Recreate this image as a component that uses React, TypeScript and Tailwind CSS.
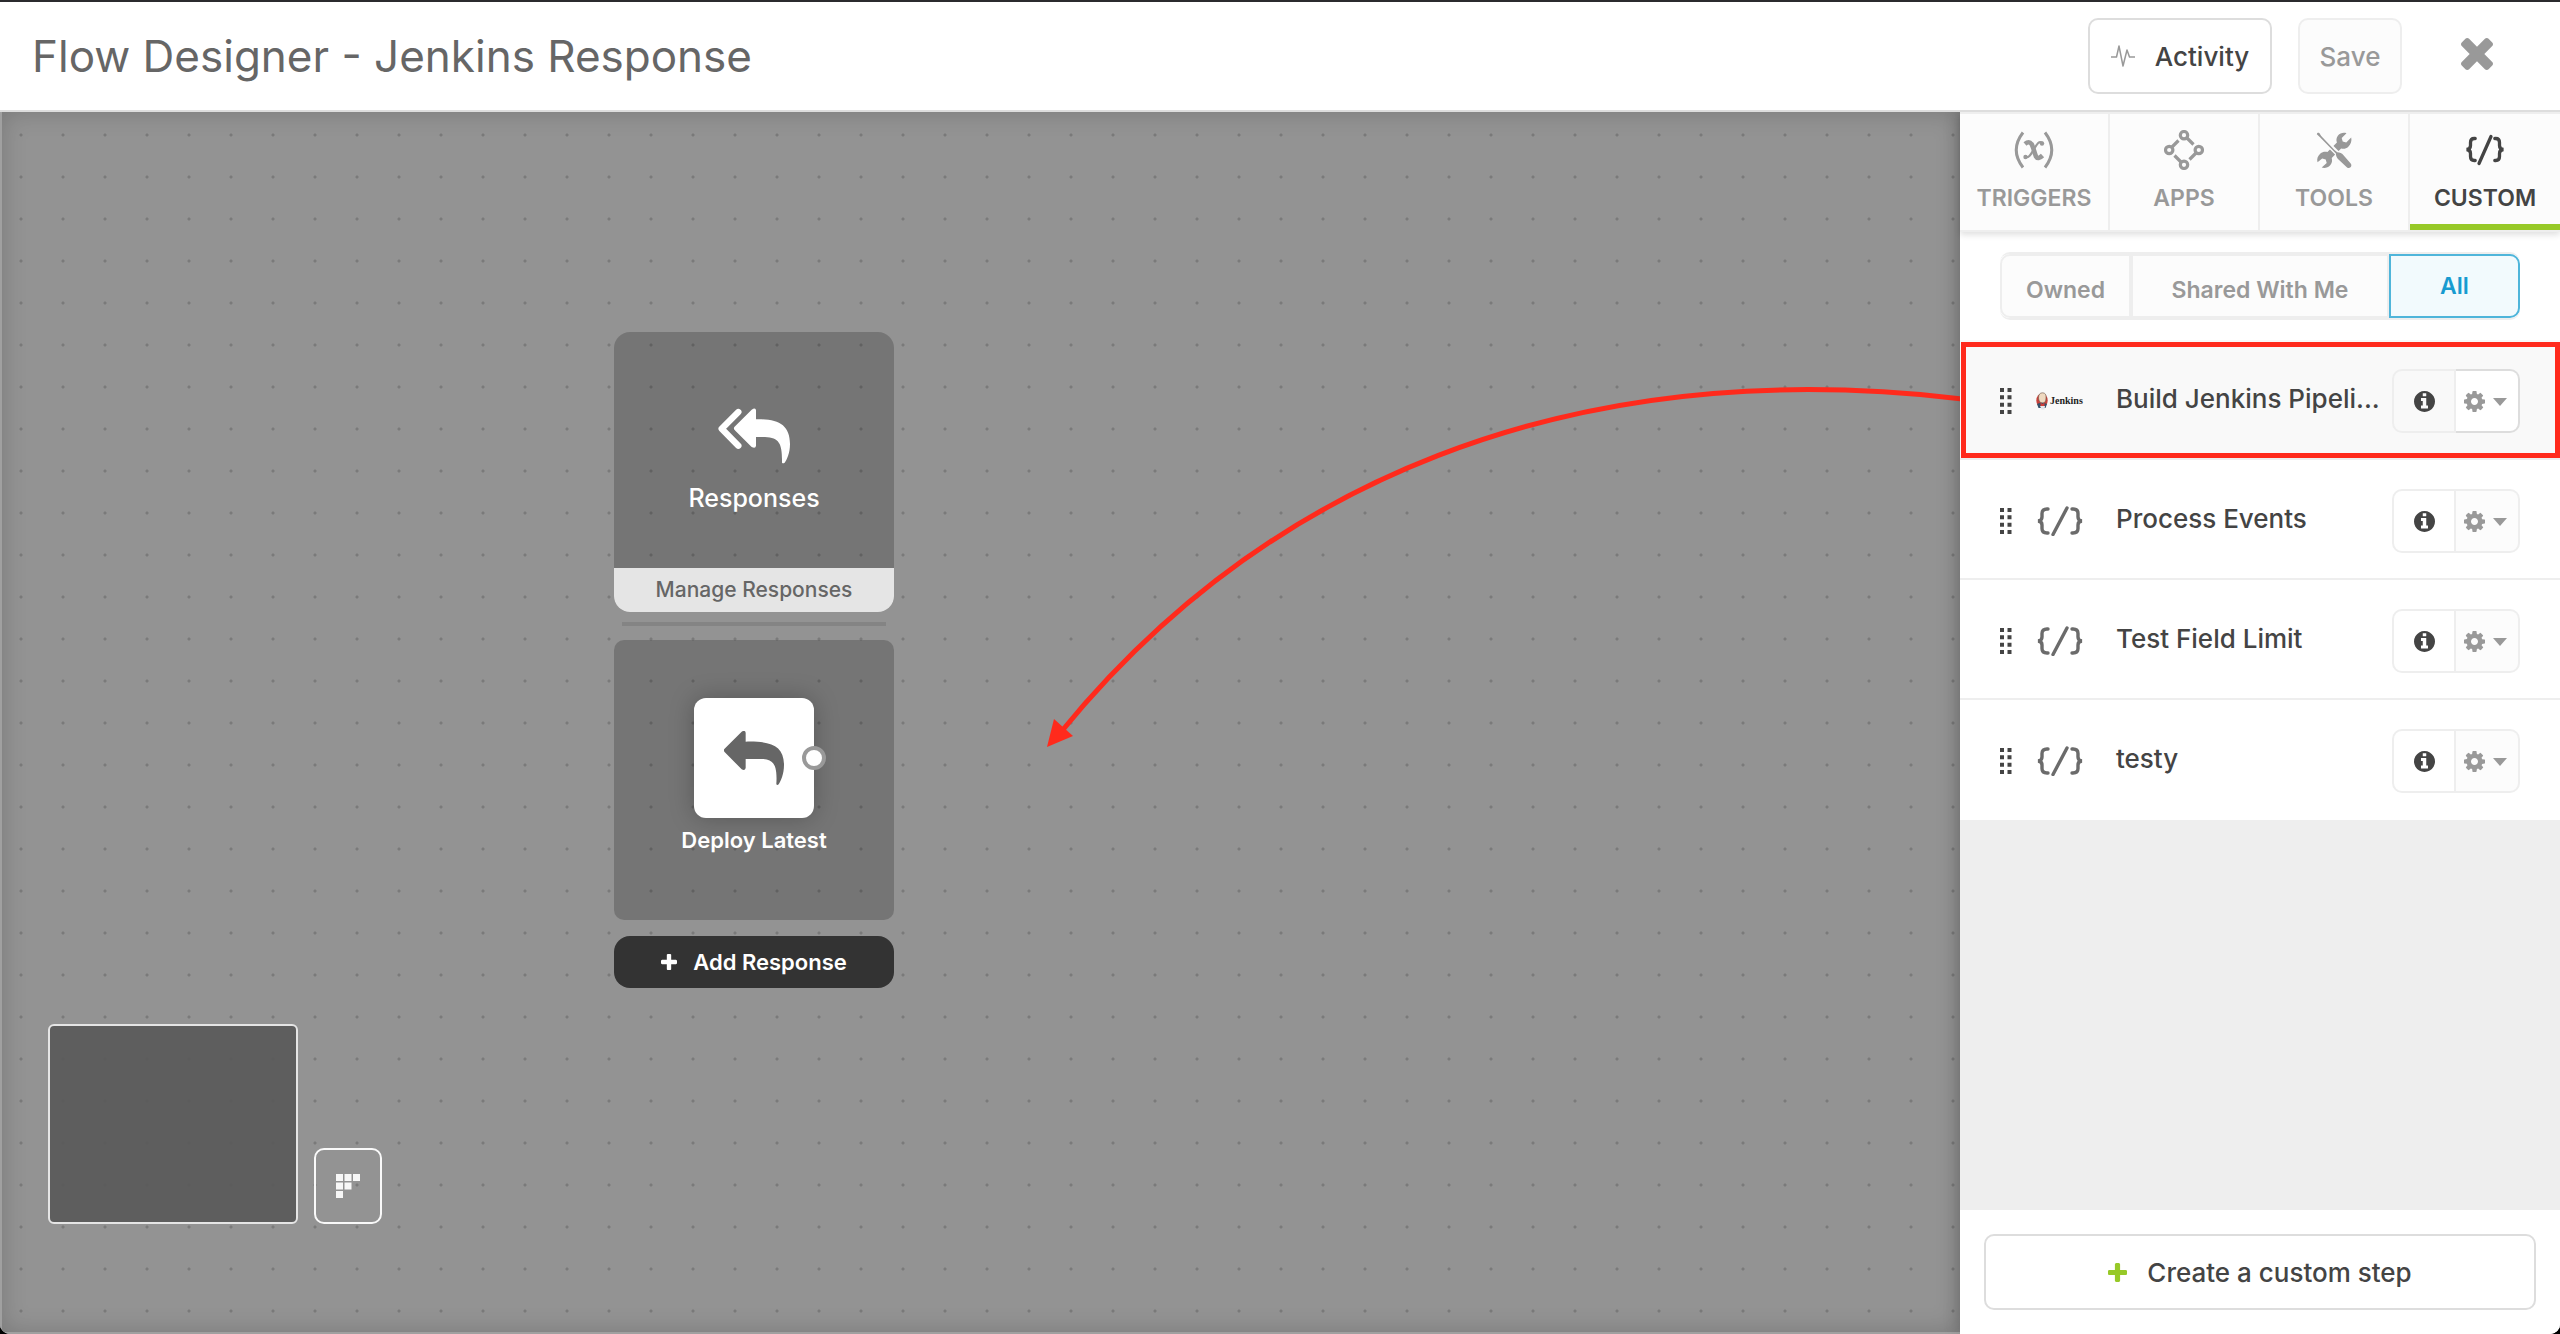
import type { ReactNode } from "react";

function Glyph({ box, d, className }: { box: string; d: string; className: string }) {
  return (
    <svg viewBox={box} className={className} fill="currentColor" aria-hidden="true">
      <path d={d} />
    </svg>
  );
}

const TIMES =
  "M1490 1322q0 40-28 68l-136 136q-28 28-68 28t-68-28l-294-294-294 294q-28 28-68 28t-68-28l-136-136q-28-28-28-68t28-68l294-294-294-294q-28-28-28-68t28-68l136-136q28-28 68-28t68 28l294 294 294-294q28-28 68-28t68 28l136 136q28 28 28 68t-28 68l-294 294 294 294q28 28 28 68z";
const PLUS =
  "M1600 736v192q0 40-28 68t-68 28h-416v416q0 40-28 68t-68 28h-192q-40 0-68-28t-28-68v-416h-416q-40 0-68-28t-28-68v-192q0-40 28-68t68-28h416v-416q0-40 28-68t68-28h192q40 0 68 28t28 68v416h416q40 0 68 28t28 68z";
const COG =
  "M1152 896q0-106-75-181t-181-75-181 75-75 181 75 181 181 75 181-75 75-181zm512-109v222q0 12-8 23t-20 13l-185 28q-19 54-39 91 35 50 107 138 10 12 10 25t-9 23q-27 37-99 108t-94 71q-12 0-26-9l-138-108q-44 23-91 38-16 136-29 186-7 28-36 28h-222q-14 0-24.5-8.5t-11.5-21.5l-28-184q-49-16-90-37l-141 107q-10 9-25 9-14 0-25-11-126-114-165-168-7-10-7-23 0-12 8-23 15-21 51-66.5t54-70.5q-27-50-41-99l-183-27q-13-2-21-12.5t-8-23.5v-222q0-12 8-23t19-13l186-28q14-46 39-92-40-57-107-138-10-12-10-24 0-10 9-23 26-36 98.5-107.5t94.5-71.5q13 0 26 10l138 107q44-23 91-38 16-136 29-186 7-28 36-28h222q14 0 24.5 8.5t11.5 21.5l28 184q49 16 90 37l142-107q9-9 24-9 13 0 25 10 129 119 165 170 7 8 7 22 0 12-8 23-15 21-51 66.5t-54 70.5q26 50 41 98l183 28q13 2 21 12.5t8 23.5z";
const INFO =
  "M1152 1376v-160q0-14-9-23t-23-9h-96v-512q0-14-9-23t-23-9h-320q-14 0-23 9t-9 23v160q0 14 9 23t23 9h96v320h-96q-14 0-23 9t-9 23v160q0 14 9 23t23 9h448q14 0 23-9t9-23zm-128-896v-160q0-14-9-23t-23-9h-192q-14 0-23 9t-9 23v160q0 14 9 23t23 9h192q14 0 23-9t9-23zm640 416q0 209-103 385.5t-279.5 279.5-385.5 103-385.5-103-279.5-279.5-103-385.5 103-385.5 279.5-279.5 385.5-103 385.5 103 279.5 279.5 103 385.5z";

function TriggerIcon() {
  return (
    <svg viewBox="0 0 40 40" className="size-10" fill="none" stroke="currentColor" aria-hidden="true">
      <path d="M9 2.5Q-4.500 20 9 37.500M31 2.500Q44.500 20 31 37.500" strokeWidth="3" />
      <path d="M11 14q4-3.500 6.500 0c1.500 2 3 9 4.500 12.500q2 3.500 6.500-1" strokeWidth="4.600" />
      <path d="M28.500 13c-4-3-6 2-9 7s-4.500 8-8.500 7" strokeWidth="2.200" />
      <circle cx="28" cy="13.500" r="2.200" fill="currentColor" stroke="none" />
      <circle cx="11.500" cy="27" r="2.200" fill="currentColor" stroke="none" />
    </svg>
  );
}

function AppsIcon() {
  return (
    <svg viewBox="0 0 40 40" className="size-10" fill="none" stroke="currentColor" strokeWidth="3.200" aria-hidden="true">
      <circle cx="20" cy="5.200" r="3.700" />
      <circle cx="5.200" cy="20" r="3.700" />
      <circle cx="34.800" cy="20" r="3.700" />
      <circle cx="20" cy="34.800" r="3.700" />
      <path d="M8 17l6.500-6.500M23 8l6.500 6.500M32 23l-6.500 6.500M17 32l-6.500-6.500" />
    </svg>
  );
}

function ToolsIcon() {
  return (
    <svg viewBox="0 0 40 40" className="size-10" aria-hidden="true">
      <path
        fill="currentColor"
        d="M37.200 7.500l-5 5-3.500-1-1-3.500 4.800-4.800c-3-1-6.500-.2-8.500 2.300-1.700 2.200-1.900 4.600-1.100 7L13.400 22c-2.500-.6-5-.2-7 1.500-2.700 2.300-3.800 5.500-2.900 8.800l4.700-3.700 3.500 1 1 3.500-5 4.500c3 .9 6.300.2 8.500-2.400 1.900-2.200 2.300-4.700 1.500-7.300l9.400-9.400c2.600.7 5.200.2 7.200-1.700 2.500-2.400 3.700-5.800 2.900-9.300z"
      />
      <path stroke="#fcfcfc" strokeWidth="5" d="M13 13l12 12" />
      <path
        fill="currentColor"
        d="M2.800 4.200c.3-1.300 1.500-1.800 2.700-1l1.700 2.900L20.500 20l2.800 2.200c2.500.1 4.500 1 6 2.800l7.400 8.500c1 1.500.8 2.800-.2 3.800s-2.400 1-3.700-.1L24.500 29.500c-1.700-1.600-2.600-3.600-2.600-6L19.500 21 6 7.200z"
      />
    </svg>
  );
}

function CustomIcon() {
  return (
    <svg viewBox="0 0 40 40" className="size-10" fill="none" stroke="currentColor" strokeWidth="3.300" strokeLinecap="round" aria-hidden="true">
      <path d="M10.200 8.500h-1q-3.700 0-3.700 4v3q0 3.700-4 4 4 .3 4 4v3q0 4 3.700 4h1M29.800 8.500h1q3.700 0 3.700 4v3q0 3.700 4 4-4 .3-4 4v3q0 4-3.700 4h-1M26 6.500L14 33.500" />
    </svg>
  );
}

function StepIcon() {
  return (
    <svg viewBox="0 0 48 30" className="h-[30px] w-12" fill="none" stroke="#6b6b6b" strokeWidth="3.400" strokeLinecap="round" aria-hidden="true">
      <path d="M12 3h-1q-5 0-5 4.500v3.500q0 3.700-4 4 4 .3 4 4v3.500q0 4.500 5 4.500h1M36 3h1q5 0 5 4.500v3.500q0 3.700 4 4-4 .3-4 4v3.500q0 4.500-5 4.500h-1M31 2L17 28.500" />
    </svg>
  );
}

function JenkinsLogo() {
  return (
    <span className="flex w-12 items-center gap-0.5">
      <svg viewBox="0 0 12 18" className="h-[18px] w-3 shrink-0" aria-hidden="true">
        <ellipse cx="6" cy="8.500" rx="5.700" ry="7" fill="#c8423b" />
        <path d="M2.500 6Q2.500.8 6.500.8T10 6q0 5-3.500 5T2.500 6z" fill="#efd9c0" stroke="#6b5548" strokeWidth=".6" />
        <path d="M1 12q5-2.500 10 0l-1.500 4h-7z" fill="#35516b" />
        <path d="M4.500 10.500l2 1.500 2-1.500v4h-4z" fill="#d23f3a" />
        <path d="M4 14h5l-.5 3.500h-3z" fill="#e4e8ec" />
      </svg>
      <span className="font-[Liberation_Serif,serif] text-[10px] leading-none font-bold text-[#222]">Jenkins</span>
    </span>
  );
}

function DragHandle() {
  return (
    <svg viewBox="0 0 12 26" className="h-[26px] w-3 shrink-0" fill="#444" aria-hidden="true">
      {[0, 7.3, 14.7, 22].map((y) => (
        <path key={y} d={`M0 ${y}h4v4h-4zM7.500 ${y}h4v4h-4z`} />
      ))}
    </svg>
  );
}

const tabs: { label: string; icon: ReactNode; active?: boolean }[] = [
  { label: "TRIGGERS", icon: <TriggerIcon /> },
  { label: "APPS", icon: <AppsIcon /> },
  { label: "TOOLS", icon: <ToolsIcon /> },
  { label: "CUSTOM", icon: <CustomIcon />, active: true },
];

const steps = [
  { name: "Build Jenkins Pipeli...", jenkins: true },
  { name: "Process Events" },
  { name: "Test Field Limit" },
  { name: "testy" },
];

function StepRow({ name, jenkins }: { name: string; jenkins?: boolean }) {
  return (
    <li
      className={`relative flex h-[120px] items-center border-b-2 border-[#eee] px-10 pt-1 last:border-white ${
        jenkins ? "bg-[#f9f9f9]" : "bg-white"
      }`}
    >
      <DragHandle />
      <span className="ml-6 flex w-12 shrink-0">{jenkins ? <JenkinsLogo /> : <StepIcon />}</span>
      <span className="ml-8 min-w-0 flex-1 pb-1 text-[26px] leading-8 font-medium whitespace-nowrap text-[#444]">{name}</span>
      <span className="flex h-16 w-32 shrink-0">
        <button aria-label={`About ${name}`} className="flex w-16 items-center justify-center rounded-l-[10px] border-2 border-[#eee] text-[#444]">
          <Glyph box="128 128 1536 1536" d={INFO} className="size-[21px]" />
        </button>
        <button
          aria-label={`Settings for ${name}`}
          className={`flex flex-1 items-center justify-center gap-2 rounded-r-[10px] border-2 border-l-0 pr-1 text-[#999] ${
            jenkins ? "border-[#ddd] bg-white" : "border-[#eee] bg-[#fcfcfc]"
          }`}
        >
          <Glyph box="128 128 1536 1536" d={COG} className="size-[21px]" />
          <svg viewBox="0 0 14 9" className="h-[9px] w-3.5" fill="currentColor" aria-hidden="true">
            <path d="M0 1h14L7 9z" />
          </svg>
        </button>
      </span>
      {jenkins && <span className="pointer-events-none absolute top-0.5 right-0 bottom-0 left-px border-5 border-[#ff2a1c]" />}
    </li>
  );
}

function Canvas() {
  return (
    <main className="relative min-w-0 flex-1 overflow-hidden border-b-2 border-l-2 border-[#a0a0a0] bg-[#939393] bg-[radial-gradient(circle,#7a7a7a_1px,transparent_2px)] bg-size-[42px_42px] bg-position-[-2px_2px] shadow-[inset_0_0_24px_rgba(0,0,0,0.18)]">
      <section className="absolute top-[220px] left-[612px] flex w-[280px] flex-col">
        <div className="flex h-[280px] flex-col overflow-hidden rounded-2xl bg-black/20">
          <div className="flex flex-1 flex-col items-center pt-[76px]">
            <svg viewBox="354 265 216 166" className="h-[56px] w-[72px]" aria-hidden="true">
              <path d="M415 276L365 326l50 51" fill="none" stroke="#fff" strokeWidth="19" strokeLinecap="round" strokeLinejoin="round" />
              <path
                fill="#fff"
                d="M403 321L455 269q12-8 13 2V298C535 296 570 315 570 372C570 400 560 420 554 428q-5 4-8 0C547 375 540 352 495 351H468V377q-1 10-13 4L403 329q-3-4 0-8Z"
              />
            </svg>
            <span className="mt-[18px] text-[25px] leading-8 font-medium text-white">Responses</span>
          </div>
          <button className="h-11 bg-[#e5e5e5] text-[21px] font-medium text-[#666]">Manage Responses</button>
        </div>
        <div className="mx-2 mt-2.5 h-1 bg-black/10" />
        <div className="mt-3.5 flex h-[280px] flex-col items-center rounded-[10px] bg-black/20 pt-[58px]">
          <div className="relative flex size-[120px] items-center justify-center rounded-xl bg-white shadow-[0_0_24px_rgba(0,0,0,0.25)]">
            <svg viewBox="372 330 180 162" className="h-[54px] w-[60px]" aria-hidden="true">
              <path
                fill="#666"
                d="M373 384L425 332q10-6 12 3V362C512 360 552 374 552 432C552 460 542 480 536 490q-4 4-7 0C532 440 525 416 490 414H437V441q-2 9-12 4L373 392q-3-4 0-8Z"
              />
            </svg>
            <span className="absolute top-12 -right-3 size-6 rounded-full border-4 border-[#999] bg-white" />
          </div>
          <span className="mt-1.5 text-[22px] leading-8 font-semibold text-white">Deploy Latest</span>
        </div>
        <button className="mt-4 flex h-[52px] items-center justify-center gap-4 rounded-2xl bg-[#333] text-[22px] font-semibold text-white">
          <Glyph box="192 128 1408 1408" d={PLUS} className="size-4" />
          Add Response
        </button>
      </section>

      <svg viewBox="1040 380 922 380" className="pointer-events-none absolute top-[268px] left-[1038px] h-[380px] w-[922px]" aria-hidden="true">
        <path d="M1963 399C1564 352 1262 486 1061 732" fill="none" stroke="#ff2a1c" strokeWidth="5" />
        <path d="M1047 747L1054 719L1073 736Z" fill="#ff2a1c" />
      </svg>

      <div className="absolute bottom-[108px] left-[46px] flex items-end gap-4">
        <div className="h-[200px] w-[250px] rounded-md border-2 border-[#e5e5e5] bg-[#5b5b5b]/95" />
        <button aria-label="Toggle minimap" className="flex h-[76px] w-[68px] items-center justify-center rounded-[10px] border-2 border-[#f9f9f9] text-[#f7f7f7]">
          <svg viewBox="0 0 24 24" className="size-6" fill="currentColor" aria-hidden="true">
            <path d="M0 0h7v7h-7zM8.500 0h7v7h-7zM17 0h7v7h-7zM0 8.500h7v7h-7zM8.500 8.500h7v7h-7zM0 17h7v7h-7z" />
          </svg>
        </button>
      </div>
    </main>
  );
}

function Sidebar() {
  return (
    <aside className="z-10 flex w-[600px] shrink-0 flex-col bg-[#eee] shadow-[0_0_16px_rgba(0,0,0,0.2)]">
      <nav className="z-10 grid grid-cols-4 border-y-2 border-[#eee] bg-[#fcfcfc] shadow-[0_3px_6px_rgba(0,0,0,0.12)]">
        {tabs.map((tab) => (
          <button
            key={tab.label}
            className={`flex h-[116px] flex-col items-center gap-3 pt-4 text-[23px] leading-8 font-semibold ${
              tab.active ? "border-b-6 border-[#97c928] text-[#444]" : "border-r-2 border-[#eee] text-[#999]"
            }`}
          >
            {tab.icon}
            {tab.label}
          </button>
        ))}
      </nav>
      <div className="bg-white px-10 py-5">
        <div className="flex rounded-[10px] border-y-2 border-[#eee] text-[23px] font-semibold text-[#999]">
          <button className="h-16 flex-1 rounded-l-[10px] border-2 border-[#eee] bg-[#fcfcfc] pt-2">Owned</button>
          <button className="h-16 flex-2 border-2 border-[#eee] bg-[#fcfcfc] pt-2">Shared With Me</button>
          <button className="h-16 flex-1 rounded-r-[10px] border-2 border-[#4fb5da] bg-[#f2fafd] text-[#189bd0]">All</button>
        </div>
      </div>
      <ul>
        {steps.map((step) => (
          <StepRow key={step.name} {...step} />
        ))}
      </ul>
      <div className="mt-auto bg-white p-6">
        <button className="flex h-[76px] w-full items-center justify-center gap-5 rounded-[10px] border-2 border-[#ddd] bg-white text-[26px] font-medium text-[#444]">
          <Glyph box="192 128 1408 1408" d={PLUS} className="size-[19px] text-[#97c928]" />
          Create a custom step
        </button>
      </div>
    </aside>
  );
}

export default function App() {
  return (
    <div className="h-screen bg-black font-[Inter,sans-serif]">
      <div className="flex h-full flex-col overflow-hidden rounded-b-[10px] bg-white">
        <header className="z-20 flex items-center border-t-2 border-b-2 border-t-[#2b2b2e] border-b-[#ddd] bg-white py-4 pr-[67px] pl-8">
          <h1 className="flex-1 text-[44px] leading-[48px] text-[#666]">Flow Designer - Jenkins Response</h1>
          <button className="flex h-[76px] w-46 items-center justify-center gap-5 rounded-[10px] border-2 border-[#ddd] bg-white text-[26px] font-medium text-[#444]">
            <svg viewBox="0 0 24 24" className="size-6 text-[#999]" fill="none" stroke="currentColor" strokeWidth="1.500" strokeLinejoin="round" aria-hidden="true">
              <path d="M0 13h5.500L8 2l4 20 4-16 2.500 7H24" />
            </svg>
            Activity
          </button>
          <button className="ml-[26px] flex h-[76px] w-26 items-center justify-center rounded-[10px] border-2 border-[#eee] bg-[#fcfcfc] text-[26px] font-medium text-[#999]">
            Save
          </button>
          <button aria-label="Close" className="ml-[59px] pb-1 text-[#999]">
            <Glyph box="302 366 1188 1188" d={TIMES} className="size-8" />
          </button>
        </header>
        <div className="flex min-h-0 flex-1">
          <Canvas />
          <Sidebar />
        </div>
      </div>
    </div>
  );
}
